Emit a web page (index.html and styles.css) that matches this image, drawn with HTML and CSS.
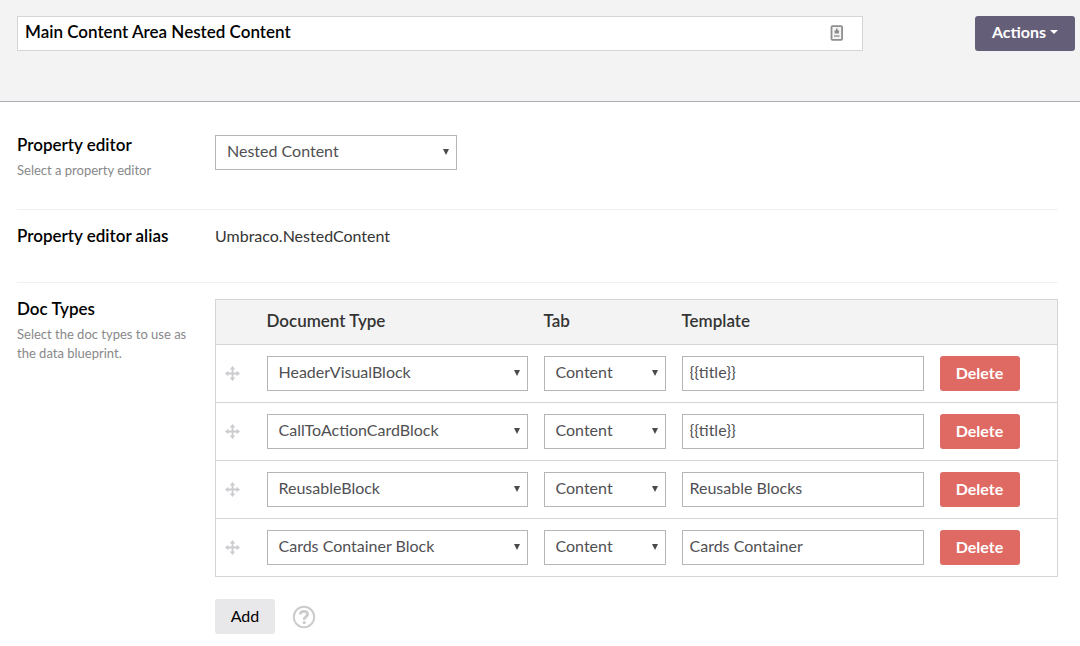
FILE: index.html
```html
<!DOCTYPE html>
<html lang="en">
<head>
<meta charset="utf-8">
<meta name="viewport" content="width=device-width, initial-scale=1">
<title>Main Content Area Nested Content</title>
<link rel="stylesheet" href="styles.css">
</head>
<body>
<svg class="sprite" aria-hidden="true">
  <symbol id="move" viewBox="0 0 15 15">
    <path fill="currentColor" d="M7.5 0 10.3 3.4H8.4V6.6H11.6V4.7L15 7.5 11.6 10.3V8.4H8.4V11.6H10.3L7.5 15 4.7 11.6H6.6V8.4H3.4V10.3L0 7.5 3.4 4.7V6.6H6.6V3.4H4.7Z"/>
  </symbol>
</svg>
<header class="header">
  <div class="name-field">
    <input class="name-input" type="text" aria-label="Name" value="Main Content Area Nested Content">
    <svg class="contact-icon" viewBox="0 0 14 16" aria-hidden="true">
      <rect x="1.5" y="1.2" width="10.6" height="13.6" rx="1" fill="#f4f4f4" stroke="#8f8f8f" stroke-width="1.8"/>
      <path fill="#8a8a8a" d="M6 3.4H7.6V5.6H9.2L8.8 8.4H4.8L4.4 5.6H6Z"/>
      <path fill="#aaa" d="M4 10.2H9.6V12H4Z"/>
    </svg>
  </div>
  <button class="btn btn-actions" type="button">Actions<span class="caret"></span></button>
</header>
<main class="panel">
  <section class="property">
    <div class="property-label">
      <label class="label" for="editor">Property editor</label>
      <p class="hint">Select a property editor</p>
    </div>
    <div class="property-control">
      <div class="select select-editor"><select id="editor"><option>Nested Content</option></select></div>
    </div>
  </section>
  <section class="property">
    <div class="property-label"><span class="label">Property editor alias</span></div>
    <div class="property-control"><p class="value">Umbraco.NestedContent</p></div>
  </section>
  <section class="property">
    <div class="property-label">
      <span class="label">Doc Types</span>
      <p class="hint">Select the doc types to use as the data blueprint.</p>
    </div>
    <div class="property-control">
      <table class="doc-types">
        <colgroup><col class="col-handle"><col class="col-type"><col class="col-tab"><col class="col-template"><col></colgroup>
        <thead>
          <tr><th></th><th scope="col">Document Type</th><th scope="col">Tab</th><th scope="col">Template</th><th></th></tr>
        </thead>
        <tbody>
          <tr>
            <td><svg class="handle"><use href="#move"/></svg></td>
            <td><div class="select"><select aria-label="Document Type"><option>HeaderVisualBlock</option></select></div></td>
            <td><div class="select"><select aria-label="Tab"><option>Content</option></select></div></td>
            <td><input class="text" type="text" aria-label="Template" value="{{title}}"></td>
            <td><button class="btn btn-danger" type="button">Delete</button></td>
          </tr>
          <tr>
            <td><svg class="handle"><use href="#move"/></svg></td>
            <td><div class="select"><select aria-label="Document Type"><option>CallToActionCardBlock</option></select></div></td>
            <td><div class="select"><select aria-label="Tab"><option>Content</option></select></div></td>
            <td><input class="text" type="text" aria-label="Template" value="{{title}}"></td>
            <td><button class="btn btn-danger" type="button">Delete</button></td>
          </tr>
          <tr>
            <td><svg class="handle"><use href="#move"/></svg></td>
            <td><div class="select"><select aria-label="Document Type"><option>ReusableBlock</option></select></div></td>
            <td><div class="select"><select aria-label="Tab"><option>Content</option></select></div></td>
            <td><input class="text" type="text" aria-label="Template" value="Reusable Blocks"></td>
            <td><button class="btn btn-danger" type="button">Delete</button></td>
          </tr>
          <tr>
            <td><svg class="handle"><use href="#move"/></svg></td>
            <td><div class="select"><select aria-label="Document Type"><option>Cards Container Block</option></select></div></td>
            <td><div class="select"><select aria-label="Tab"><option>Content</option></select></div></td>
            <td><input class="text" type="text" aria-label="Template" value="Cards Container"></td>
            <td><button class="btn btn-danger" type="button">Delete</button></td>
          </tr>
        </tbody>
      </table>
      <div class="table-actions">
        <button class="btn btn-add" type="button">Add</button>
        <button class="help" type="button" aria-label="Help">
          <svg viewBox="0 0 24 24" fill="none" stroke="currentColor">
            <circle cx="12" cy="12" r="10.2" stroke-width="2"/>
            <path stroke-width="2.8" d="M8.3 9.5C8.4 7.4 9.9 6.4 12 6.4S15.6 7.5 15.6 9.2C15.6 11.6 12.2 11.6 12.2 14.7"/>
            <path stroke-width="2.8" d="M10.8 17.6H13.6"/>
          </svg>
        </button>
      </div>
    </div>
  </section>
</main>
</body>
</html>
```
FILE: styles.css
```css
* {
  box-sizing: border-box;
}

body {
  margin: 0;
  background: #fff;
  color: #343434;
  font: 16px/20px Lato, "Liberation Sans", sans-serif;
}

p {
  margin: 0;
}

input,
select,
button {
  font: inherit;
}

.sprite {
  display: none;
}

.header {
  display: flex;
  align-items: flex-start;
  justify-content: space-between;
  gap: 112px;
  padding: 16px 5px 50px 17px;
  background: #f3f3f3;
  border-bottom: 1px solid #aeaeb9;
}

.name-field {
  position: relative;
  flex: 1;
}

.name-input {
  display: block;
  width: 100%;
  height: 35px;
  padding: 0 40px 4px 7px;
  border: 1px solid #d5d5d5;
  background: #fff;
  color: #000;
  font-size: 17px;
  font-weight: 600;
}

.contact-icon {
  position: absolute;
  top: 9px;
  right: 19px;
  width: 14px;
  height: 16px;
}

.btn {
  height: 35px;
  padding: 0 15px 2px;
  border: 0;
  border-radius: 3px;
  color: #fff;
  font-weight: 700;
}

.btn-actions {
  display: flex;
  align-items: center;
  justify-content: center;
  gap: 4px;
  width: 100px;
  padding-bottom: 4px;
  background: #655e79;
}

.caret {
  border: 4px solid transparent;
  border-top-color: #fff;
  border-bottom: 0;
}

.btn-danger {
  display: block;
  width: 80px;
  background: #df6a64;
}

.btn-add {
  width: 60px;
  background: #e8e8eb;
  color: #000;
  font-weight: 400;
}

.panel {
  padding: 17px 22px 12px 17px;
}

.property {
  display: flex;
  padding: 16px 0 29px;
}

.property + .property {
  border-top: 1px solid #f1f1f2;
  padding-bottom: 36px;
}

.property:last-child {
  padding-bottom: 0;
}

.property-label {
  width: 198px;
  padding-right: 20px;
}

.property-control {
  flex: 1;
}

.label {
  display: block;
  color: #000;
  font-size: 17px;
  font-weight: 600;
}

.hint {
  padding-top: 6px;
  color: #88888a;
  font-size: 13px;
  line-height: 19px;
}

.select {
  position: relative;
}

.select-editor {
  width: 242px;
}

.select::after {
  content: "";
  position: absolute;
  top: 14px;
  right: 8px;
  border: 3px solid transparent;
  border-top: 6px solid #4a4a4a;
  border-bottom: 0;
  pointer-events: none;
}

select,
.text {
  display: block;
  width: 100%;
  height: 35px;
  padding: 0 7px 4px;
  border: 1px solid #b5b5b9;
  border-radius: 0;
  background: #fff;
  color: #505053;
}

select {
  appearance: none;
  padding: 0 24px 4px 11px;
}

.doc-types {
  width: 100%;
  table-layout: fixed;
  border-collapse: collapse;
  border: 1px solid #d5d5d8;
}

.col-handle {
  width: 43px;
}

.col-type {
  width: 277px;
}

.col-tab {
  width: 138px;
}

.col-template {
  width: 258px;
}

.doc-types tr {
  border-bottom: 1px solid #d5d5d8;
}

.doc-types th {
  height: 45px;
  padding: 0 8px 2px;
  background: #f3f3f3;
  font-size: 17px;
  font-weight: 600;
  text-align: left;
}

.doc-types td {
  padding: 11px 8px;
}

.handle {
  display: block;
  width: 15px;
  height: 15px;
  margin-left: 1px;
  color: #ccccd0;
}

.table-actions {
  display: flex;
  align-items: center;
  gap: 17px;
  padding-top: 22px;
}

.help {
  width: 24px;
  height: 24px;
  padding: 0;
  border: 0;
  background: none;
  color: #ccc;
}

.help svg {
  display: block;
}
```
